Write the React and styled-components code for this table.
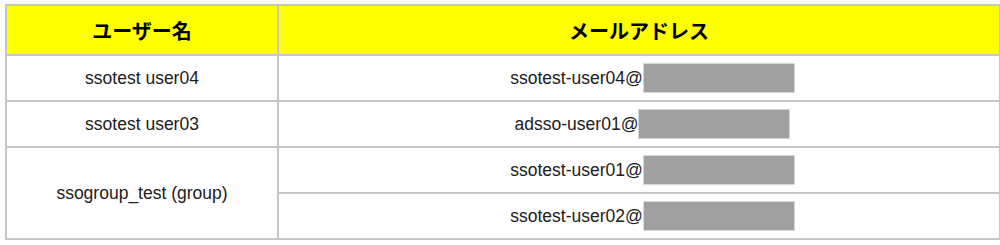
import React from "react";
import styled, { createGlobalStyle } from "styled-components";

const Global = createGlobalStyle`
  html, body { margin: 0; padding: 0; background: #ffffff; }
  body { font-family: "Liberation Sans", Arial, "Noto Sans CJK JP", sans-serif; }
`;

const Page = styled.div`
  padding: 4px 5px 0 5px;
`;

const Table = styled.table`
  width: 990px;
  border-collapse: collapse;
  table-layout: fixed;
  border: 2px solid #c6c6c6;
`;

const HeadRow = styled.tr`
  height: 50px;
  background: #ffff00;
`;

const BodyRow = styled.tr`
  height: ${(p) => p.$h || 46}px;
`;

const HeaderCell = styled.th`
  border: 2px solid #c6c6c6;
  font-family: "Noto Sans CJK JP", sans-serif;
  font-weight: 700;
  font-size: 20px;
  color: #000;
  text-align: center;
  vertical-align: middle;
  padding: 0;
  width: ${(p) => p.$w}px;
`;

const Cell = styled.td`
  border: 2px solid #c6c6c6;
  font-size: 17.5px;
  color: #202020;
  text-align: center;
  vertical-align: middle;
  padding: 0 0 0 ${(p) => (p.$shift ? 26 : 0)}px;
  white-space: nowrap;
`;

const Email = styled.span`
  display: inline-flex;
  align-items: center;
`;

const Redacted = styled.span`
  display: inline-block;
  width: 150px;
  height: 28px;
  background: #a0a0a0;
  box-shadow: 0 0 0 1px #d8d8d8;
  margin-left: 1px;
`;

const users = [
  { name: "ssotest user04", emails: ["ssotest-user04@"] },
  { name: "ssotest user03", emails: ["adsso-user01@"] },
  { name: "ssogroup_test (group)", emails: ["ssotest-user01@", "ssotest-user02@"] },
];

export default function App() {
  return (
    <Page>
      <Global />
      <Table>
        <thead>
          <HeadRow>
            <HeaderCell $w={270}>ユーザー名</HeaderCell>
            <HeaderCell $w={720}>メールアドレス</HeaderCell>
          </HeadRow>
        </thead>
        <tbody>
          {users.flatMap((u) =>
            u.emails.map((e, i) => (
              <BodyRow key={u.name + e}>
                {i === 0 && <Cell rowSpan={u.emails.length}>{u.name}</Cell>}
                <Cell $shift>
                  <Email>
                    {e}
                    <Redacted />
                  </Email>
                </Cell>
              </BodyRow>
            ))
          )}
        </tbody>
      </Table>
    </Page>
  );
}
